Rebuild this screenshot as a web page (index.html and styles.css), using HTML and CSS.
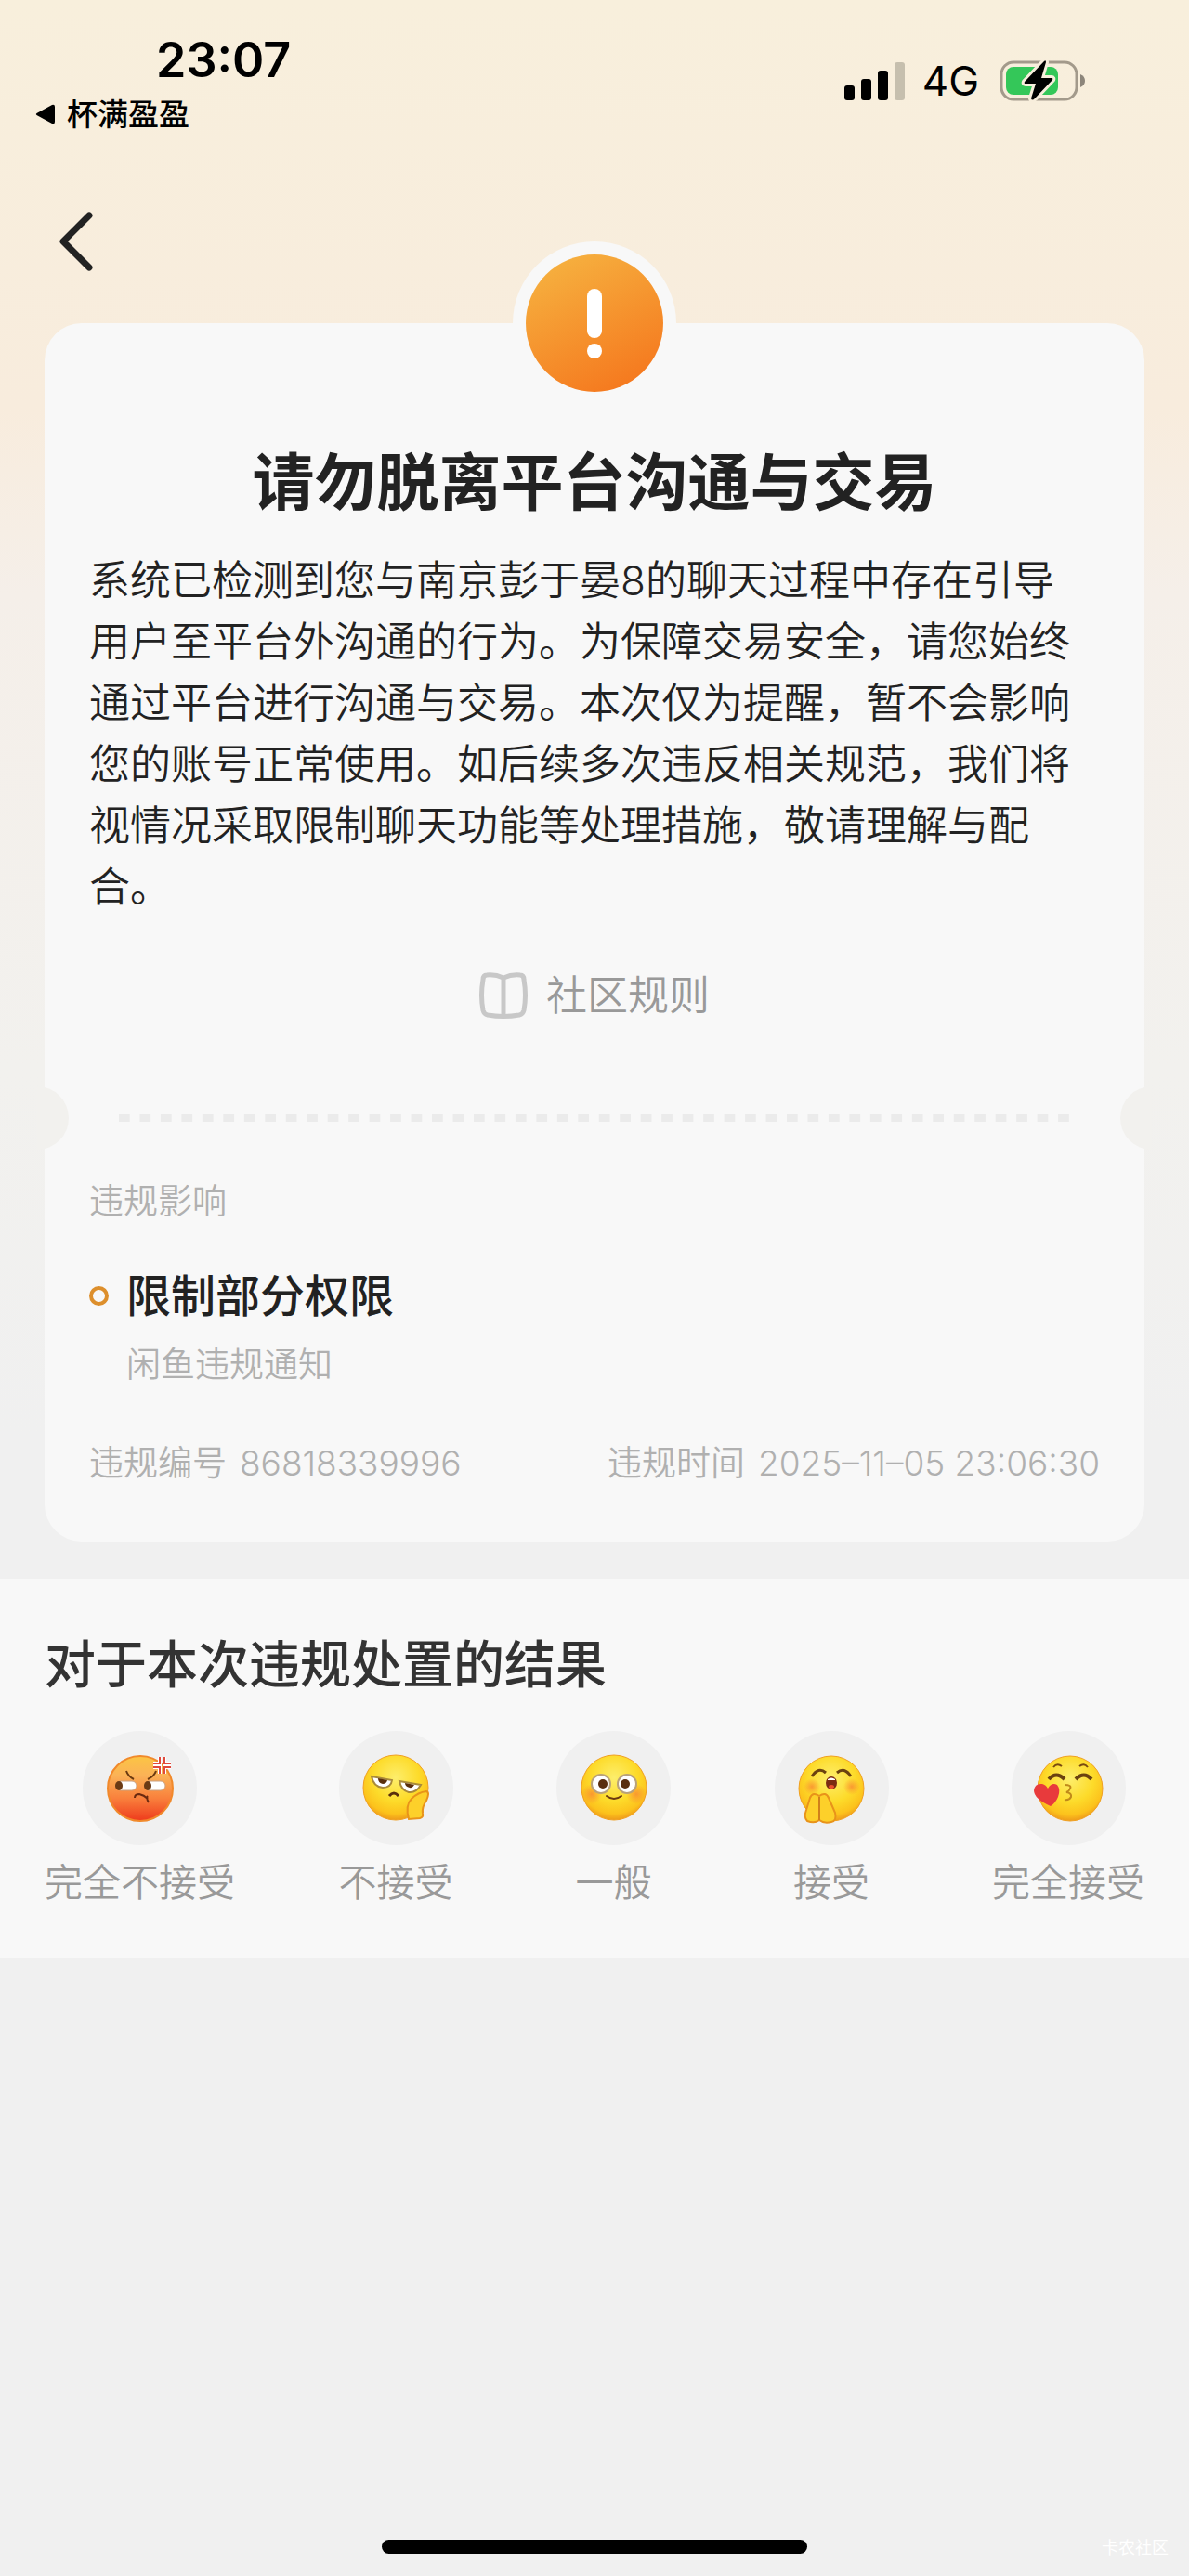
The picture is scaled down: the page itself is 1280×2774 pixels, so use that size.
FILE: index.html
```html
<!DOCTYPE html>
<html lang="zh-CN">
<head>
  <meta charset="UTF-8">
  <meta name="viewport" content="width=device-width, initial-scale=1">
  <title>请勿脱离平台沟通与交易</title>
  <link rel="stylesheet" href="styles.css">
</head>
<body>

<!-- 状态栏 -->
<header class="status-bar">
  <div class="status-left">
    <div class="clock">23:07</div>
    <a class="back-app" href="#">
      <svg width="22" height="24" viewBox="0 0 22 24"><path d="M1.500 11 L18 2 Q21 1 21 4 V20 Q21 23 18 22 L1.500 13 Q0 12 1.500 11Z" fill="#000"/></svg>
      杯满盈盈
    </a>
  </div>
  <div class="status-right">
    <svg class="signal" width="66" height="42" viewBox="0 0 66 42">
      <rect x="0" y="26" width="11" height="16" rx="3"/>
      <rect x="18" y="19" width="11" height="23" rx="3"/>
      <rect x="36" y="10" width="11" height="32" rx="3"/>
      <rect x="54" y="1" width="11" height="41" rx="3" fill="#c6bfae"/>
    </svg>
    <span class="network">4G</span>
    <svg class="battery" width="94" height="48" viewBox="0 0 94 48">
      <rect x="2" y="4" width="81" height="40" rx="13" fill="none" stroke="#a39a8b" stroke-width="3"/>
      <path d="M87 17 Q92 19 92 24 Q92 29 87 31Z" fill="#8d867b"/>
      <rect x="7" y="9" width="56" height="30" rx="8" fill="#34c759"/>
      <path d="M48 3 L27 25 Q26 27 28 27 H39 L34 43 Q35 46 38 43 L57 23 Q58 21 56 21 H45 L50 4 Q50 1 48 3Z" fill="#000" stroke="#f8eedc" stroke-width="6" paint-order="stroke" stroke-linejoin="round"/>
    </svg>
  </div>
</header>

<nav class="nav">
  <button class="nav-back" type="button" aria-label="返回">
    <svg width="44" height="70" viewBox="0 0 44 70"><path d="M36 7 L8 35 L36 63" fill="none" stroke="#222" stroke-width="7" stroke-linecap="round" stroke-linejoin="round"/></svg>
  </button>
</nav>

<main>
  <!-- 违规提醒卡片 -->
  <section class="card">
    <div class="badge">
      <svg width="148" height="148" viewBox="0 0 148 148">
        <defs>
          <linearGradient id="orange" x1="0.2" y1="0" x2="0.7" y2="1">
            <stop offset="0" stop-color="#f6b240"/>
            <stop offset="1" stop-color="#f5781e"/>
          </linearGradient>
        </defs>
        <circle cx="74" cy="74" r="74" fill="url(#orange)"/>
        <rect x="66" y="37" width="16" height="53" rx="8" fill="#fff"/>
        <circle cx="74" cy="104" r="8" fill="#fff"/>
      </svg>
    </div>
    <h1>请勿脱离平台沟通与交易</h1>
    <p class="notice">系统已检测到您与南京彭于晏8的聊天过程中存在引导用户至平台外沟通的行为。为保障交易安全，请您始终通过平台进行沟通与交易。本次仅为提醒，暂不会影响您的账号正常使用。如后续多次违反相关规范，我们将视情况采取限制聊天功能等处理措施，敬请理解与配合。</p>
    <a class="rules" href="#">
      <svg width="52" height="52" viewBox="0 0 52 52" fill="none" stroke="#c8c8c8" stroke-width="5" stroke-linejoin="round">
        <path d="M26 7 Q17 3 8 4 Q4 4 4 9 Q1 26 4 42 Q5 46 9 47 Q26 50 43 47 Q47 46 48 42 Q51 26 48 9 Q48 4 44 4 Q35 3 26 7Z"/>
        <path d="M26 7 V48"/>
      </svg>
      社区规则
    </a>

    <div class="divider"><div class="dashes"></div></div>

    <h2 class="label">违规影响</h2>
    <ul class="effects">
      <li>
        <strong>限制部分权限</strong>
        <span>闲鱼违规通知</span>
      </li>
    </ul>
    <div class="meta">
      <div><span>违规编号</span><span>86818339996</span></div>
      <div><span>违规时间</span><time>2025–11–05 23:06:30</time></div>
    </div>
  </section>

  <!-- 满意度反馈 -->
  <section class="feedback">
    <h2>对于本次违规处置的结果</h2>
    <div class="options">
      <button class="option" type="button">
        <span class="face">
          <svg width="80" height="80" viewBox="0 0 80 80">
            <defs>
              <linearGradient id="angry" x1="0" y1="0" x2="0" y2="1">
                <stop offset="0" stop-color="#fbc544"/>
                <stop offset="0.3" stop-color="#fbb257"/>
                <stop offset="0.65" stop-color="#f9803c"/>
                <stop offset="1" stop-color="#ee3a1c"/>
              </linearGradient>
              <radialGradient id="yellow" cx="0.5" cy="0.35" r="0.65">
                <stop offset="0" stop-color="#fdee6c"/>
                <stop offset="0.55" stop-color="#fddb2a"/>
                <stop offset="0.85" stop-color="#fcc21c"/>
                <stop offset="1" stop-color="#ee9a1a"/>
              </radialGradient>
              <radialGradient id="blush">
                <stop offset="0" stop-color="#f98a32" stop-opacity="0.8"/>
                <stop offset="1" stop-color="#f98a32" stop-opacity="0"/>
              </radialGradient>
            </defs>
            <circle cx="40" cy="40" r="35" fill="url(#angry)" stroke="#f1892b" stroke-width="2"/>
            <path d="M25 21 Q27 27 33 30 M57 21 Q55 27 48 30" fill="none" stroke="#6b3a10" stroke-width="2"/>
            <rect x="14" y="32" width="22" height="10" rx="5" fill="#fff" stroke="#c9a080"/>
            <rect x="45" y="32" width="22" height="10" rx="5" fill="#fff" stroke="#c9a080"/>
            <ellipse cx="17" cy="37" rx="4" ry="5" fill="#6b3a14"/>
            <ellipse cx="48" cy="37" rx="4" ry="5" fill="#6b3a14"/>
            <path d="M34 50 Q34 46 39 46 Q44 47 48 51 M48 48 Q46 50 49 55" fill="none" stroke="#6b2a10" stroke-width="2"/>
            <path d="M61 6 V13 H54 M66 6 V13 H73 M61 24 V17 H54 M66 24 V17 H73" fill="none" stroke="#fff" stroke-width="4"/>
            <path d="M61 6 V13 H54 M66 6 V13 H73 M61 24 V17 H54 M66 24 V17 H73" fill="none" stroke="#e04a3c" stroke-width="2"/>
          </svg>
        </span>
        完全不接受
      </button>
      <button class="option" type="button">
        <span class="face">
          <svg width="80" height="80" viewBox="0 0 80 80">
            <circle cx="40" cy="39" r="35" fill="url(#yellow)" stroke="#f0a020" stroke-width="1"/>
            <path d="M14 27 L36 31 Q35 39 26 39 Q16 38 14 27Z M44 32 L67 36 Q62 45 54 44 Q46 42 44 32Z" fill="#fff" stroke="#a98a3a" stroke-width="2"/>
            <path d="M21 29 L31 31 Q30 35 26 35 Q21 34 21 29Z M50 34 L60 36 Q58 40 55 39 Q50 38 50 34Z" fill="#5a2f0c"/>
            <path d="M33 48 Q38 42 43 48" fill="none" stroke="#5a2f0c" stroke-width="3"/>
            <path d="M54 73 Q50 58 57 51 Q64 44 73 43 Q77 44 73 53 Q68 60 69 67 Q70 71 66 72Z" fill="#fdd02a" stroke="#e8931a" stroke-width="2"/>
          </svg>
        </span>
        不接受
      </button>
      <button class="option" type="button">
        <span class="face">
          <svg width="80" height="80" viewBox="0 0 80 80">
            <circle cx="40" cy="39" r="35" fill="url(#yellow)" stroke="#f0a020" stroke-width="1"/>
            <circle cx="16" cy="46" r="11" fill="url(#blush)"/>
            <circle cx="64" cy="46" r="11" fill="url(#blush)"/>
            <circle cx="26" cy="35" r="10" fill="#fff" stroke="#b9a27a" stroke-width="2"/>
            <circle cx="54" cy="35" r="10" fill="#fff" stroke="#b9a27a" stroke-width="2"/>
            <circle cx="28" cy="35" r="5" fill="#5a2f10"/>
            <circle cx="52" cy="35" r="5" fill="#5a2f10"/>
            <path d="M32 48 Q40 54 48 48" fill="none" stroke="#6b3a10" stroke-width="2" stroke-linecap="round"/>
          </svg>
        </span>
        一般
      </button>
      <button class="option" type="button">
        <span class="face">
          <svg width="80" height="80" viewBox="0 0 80 80">
            <circle cx="40" cy="40" r="35" fill="url(#yellow)" stroke="#f0a020" stroke-width="1"/>
            <circle cx="19" cy="38" r="9" fill="url(#blush)"/>
            <circle cx="62" cy="38" r="9" fill="url(#blush)"/>
            <path d="M19 27 Q26 16 34 23 M46 23 Q54 16 61 27" fill="none" stroke="#6b4210" stroke-width="3"/>
            <ellipse cx="40" cy="34" rx="6" ry="7" fill="#7a2a12"/>
            <path d="M36 30 Q40 27 44 30 V31 H36Z" fill="#fff"/>
            <ellipse cx="40" cy="38" rx="3" ry="2" fill="#e8502c"/>
            <path d="M27 74 Q22 78 14 75 Q10 71 13 63 L17 50 Q20 43 27 48 Q34 43 37 50 L44 66 Q46 75 40 76 Q32 78 27 74Z" fill="#fdd02a" stroke="#e8931a" stroke-width="2"/>
            <path d="M27 49 V74" stroke="#d0801a" stroke-width="2"/>
          </svg>
        </span>
        接受
      </button>
      <button class="option" type="button">
        <span class="face">
          <svg width="80" height="80" viewBox="0 0 80 80">
            <circle cx="42" cy="40" r="35" fill="url(#yellow)" stroke="#f0a020" stroke-width="1"/>
            <path d="M24 17 Q28 12 33 16 M52 16 Q57 12 61 17" fill="none" stroke="#7a4a10" stroke-width="2"/>
            <path d="M19 30 Q27 21 36 30 M48 30 Q57 21 65 30" fill="none" stroke="#6b4210" stroke-width="4"/>
            <path d="M36 36 Q44 36 42 40 Q41 43 38 44 Q44 45 43 49 Q41 53 36 52" fill="none" stroke="#c08a1a" stroke-width="2"/>
            <path d="M21 59 Q3 51 3 42 Q4 34 12 35 Q16 36 18 40 Q22 33 28 36 Q32 41 29 49 Q26 56 21 59Z" fill="#e83a3c"/>
          </svg>
        </span>
        完全接受
      </button>
    </div>
  </section>
</main>

<footer class="home-area">
  <div class="home-bar"></div>
  <span class="watermark">卡农社区</span>
</footer>

</body>
</html>
```

FILE: styles.css
```css
*,
*::before,
*::after {
  box-sizing: border-box;
}
body {
  margin: 0;
  min-height: 100vh;
  display: flex;
  flex-direction: column;
  font-family: Inter, "Noto Sans CJK SC", sans-serif;
  color: #222;
  background: #f0f0f0 linear-gradient(#f8efdc 0, #f8ecdd 440px, #f5efe9 640px, #f2f1ee 1150px, #f0f0f0 1550px) no-repeat;
}
h1, h2, p, ul {
  margin: 0;
  padding: 0;
}
a {
  color: inherit;
  text-decoration: none;
}
button {
  padding: 0;
  border: none;
  background: none;
  font-family: inherit;
  color: inherit;
  cursor: pointer;
}
svg {
  display: block;
}

/* 状态栏 */
.status-bar {
  display: flex;
  justify-content: space-between;
  align-items: flex-start;
  padding: 33px 110px 0 38px;
  color: #000;
}
.clock {
  padding-left: 130px;
  font-size: 52px;
  font-weight: 600;
  line-height: 64px;
}
.back-app {
  display: flex;
  align-items: center;
  gap: 12px;
  font-size: 33px;
  font-weight: 500;
  line-height: 52px;
}
.status-right {
  display: flex;
  align-items: center;
  height: 48px;
  margin-top: 30px;
}
.network {
  margin: 0 22px 0 18px;
  font-size: 44px;
}

.nav {
  height: 199px;
  padding: 76px 60px 0;
}

/* 卡片 */
.card {
  display: flow-root;
  margin: 0 48px;
  padding: 0 48px 56px;
  border-radius: 40px;
  background: #f8f8f8;
}
.badge {
  width: 176px;
  margin: -88px auto 0;
  padding: 14px;
  border-radius: 50%;
  background: #f8f8f8;
}
.card h1 {
  margin-top: 36px;
  font-size: 67px;
  line-height: 96px;
  text-align: center;
}
.notice {
  margin-top: 24px;
  padding-right: 16px;
  font-size: 44px;
  font-weight: 350;
  line-height: 66px;
}
.rules {
  display: flex;
  justify-content: center;
  align-items: center;
  gap: 20px;
  margin-top: 52px;
  font-size: 44px;
  font-weight: 350;
  line-height: 64px;
  color: #999;
}

/* 票据撕口 */
.divider {
  position: relative;
  margin: 66px -48px 0;
  padding: 30px 80px;
}
.divider::before,
.divider::after {
  content: "";
  position: absolute;
  top: 0;
  width: 34px;
  height: 68px;
  background: #f2f1ee;
}
.divider::before {
  left: -8px;
  border-radius: 0 34px 34px 0;
}
.divider::after {
  right: -8px;
  border-radius: 34px 0 0 34px;
}
.dashes {
  height: 8px;
  background: linear-gradient(90deg, #ebebeb 12px, transparent 12px) 0 0 / calc((100% + 10px) / 46) 100%;
}

.label,
.effects span,
.meta {
  font-size: 37px;
  font-weight: 350;
  line-height: 56px;
  color: #b0b0b0;
}
.label {
  margin-top: 28px;
}
.effects {
  margin-top: 38px;
  list-style: none;
}
.effects li {
  position: relative;
  padding-left: 40px;
}
.effects li::before {
  content: "";
  position: absolute;
  left: 0;
  top: 25px;
  width: 21px;
  height: 21px;
  border: 4px solid #dd8f2c;
  border-radius: 50%;
}
.effects strong {
  display: block;
  font-size: 48px;
  font-weight: 500;
  line-height: 72px;
}
.effects span {
  display: block;
  margin-top: 10px;
}
.meta {
  display: flex;
  justify-content: space-between;
  margin-top: 50px;
}
.meta div {
  display: flex;
  gap: 14px;
}

/* 反馈 */
.feedback {
  margin-top: 40px;
  padding: 52px 48px;
  background: #f8f8f8;
}
.feedback h2 {
  font-size: 55px;
  font-weight: 500;
  line-height: 80px;
  color: #333;
}
.options {
  display: flex;
  justify-content: space-between;
  margin-top: 32px;
}
.option {
  display: flex;
  flex-direction: column;
  align-items: center;
  gap: 10px;
  font-size: 41px;
  font-weight: 350;
  line-height: 60px;
  color: #999;
}
.face {
  display: flex;
  justify-content: center;
  align-items: center;
  width: 123px;
  height: 123px;
  border-radius: 50%;
  background: #f0f0f0;
}

/* 底部 */
.home-area {
  position: relative;
  margin-top: auto;
  padding-bottom: 24px;
}
.home-bar {
  width: 458px;
  height: 15px;
  margin: 0 auto;
  border-radius: 8px;
  background: #000;
}
.watermark {
  position: absolute;
  right: 22px;
  bottom: 18px;
  font-size: 18px;
  line-height: 24px;
  color: #fff;
}
```
